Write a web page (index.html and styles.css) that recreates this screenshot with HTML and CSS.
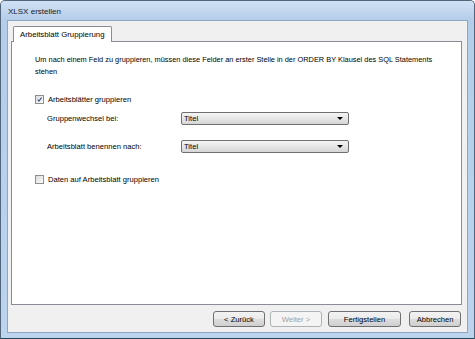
FILE: index.html
```html
<!DOCTYPE html>
<html lang="de">
<head>
  <meta charset="UTF-8" />
  <title>XLSX erstellen</title>
  <link rel="stylesheet" href="styles.css">
</head>
<body>

<div class="window">
  <div class="titlebar">XLSX erstellen</div>

  <div class="client">
    <div class="tabs">
      <div class="tab-header">
        <div class="tab active">Arbeitsblatt Gruppierung</div>
      </div>

      <div class="tab-panel">
        <p class="hint">Um nach einem Feld zu gruppieren, müssen diese Felder an erster Stelle in der ORDER BY Klausel des SQL Statements stehen</p>

        <label class="check first">
          <span class="box checked">
            <svg viewBox="0 0 9 9" width="9" height="9"><path d="M2 4.5 L3.8 6.5 L7.2 2" fill="none" stroke="#3d4f8a" stroke-width="1.4"/></svg>
          </span>
          Arbeitsblätter gruppieren
        </label>

        <div class="field">
          <span class="field-label">Gruppenwechsel bei:</span>
          <div class="combo"><span>Titel</span><span class="arrow"></span></div>
        </div>

        <div class="field">
          <span class="field-label">Arbeitsblatt benennen nach:</span>
          <div class="combo"><span>Titel</span><span class="arrow"></span></div>
        </div>

        <label class="check second">
          <span class="box"></span>
          Daten auf Arbeitsblatt gruppieren
        </label>
      </div>
    </div>

    <div class="buttons">
      <button class="btn">&lt; Zurück</button>
      <button class="btn" disabled>Weiter &gt;</button>
      <button class="btn wide">Fertigstellen</button>
      <button class="btn">Abbrechen</button>
    </div>
  </div>
</div>

</body>
</html>
```

FILE: styles.css
```css
body { margin: 0; font-family: "Liberation Sans", Arial, sans-serif; font-size: 7.6px; color: #000; }

.window { width: 475px; height: 339px; box-sizing: border-box; display: flex; flex-direction: column;
  border: 1px solid #52657a; border-bottom-color: #1f4a5a; border-radius: 5px 5px 0 0;
  background: linear-gradient(#bcd4ef, #b3cdea 20px, #bcd4ee); }
.titlebar { height: 19px; line-height: 21px; padding-left: 7px; font-size: 8px; color: #1a1a1a;
  background: linear-gradient(#d0e1f4, #b4cdea); border-radius: 4px 4px 0 0; }

.client { flex: 1; margin: 0 6px 5px 6px; background: #f0f0f0; border: 1px solid #8fa6c0;
  display: flex; flex-direction: column; }

.tabs { flex: 1; display: flex; flex-direction: column; padding: 4px 5px 0 3px; }
.tab-header { display: flex; padding-left: 2px; height: 16px; }
.tab { padding: 0 6px; line-height: 15px; background: #fff; border: 1px solid #898c95; border-bottom: none;
  border-radius: 2px 2px 0 0; position: relative; top: 1px; z-index: 1; height: 15px; font-size: 7.8px; }
.tab-panel { flex: 1; background: #fff; border: 1px solid #898c95; padding: 12px 10px 0 23px; }

.hint { margin: 0; line-height: 12px; width: 418px; font-size: 7.4px; }

.check { display: flex; align-items: center; gap: 4px; }
.check.first { margin-top: 17px; }
.check.second { margin-top: 22px; }
.box { width: 7px; height: 7px; border: 1px solid #8e8f8f; background: linear-gradient(135deg, #dcdcdc, #fbfbfb);
  display: flex; align-items: center; justify-content: center; }
.box svg { display: block; }

.field { display: flex; align-items: center; margin-top: 8px; padding-left: 12px; }
.field + .field { margin-top: 15px; }
.field-label { width: 134px; }
.combo { width: 159px; height: 11px; border: 1px solid #707070; border-radius: 2px;
  background: linear-gradient(#f4f4f4, #e6e6e6 50%, #d6d6d6); display: flex; align-items: center;
  justify-content: space-between; padding: 0 5px 0 2px; }
.arrow { width: 0; height: 0; border-left: 3px solid transparent; border-right: 3px solid transparent; border-top: 3px solid #000; }

.buttons { display: flex; justify-content: flex-end; gap: 5px; padding: 6px 6px 5px 0; }
.btn { font-family: inherit; font-size: 7.6px; height: 16px; width: 52px; padding: 0; color: #000;
  border: 1px solid #707070; border-radius: 3px; background: linear-gradient(#f2f2f2, #ebebeb 50%, #dddddd 51%, #cfcfcf); }
.btn.wide { width: 73px; margin-left: 1px; margin-right: 3px; }
.btn:disabled { color: #a0a0a0; border-color: #adb2b5; background: #f4f4f4; }
```
